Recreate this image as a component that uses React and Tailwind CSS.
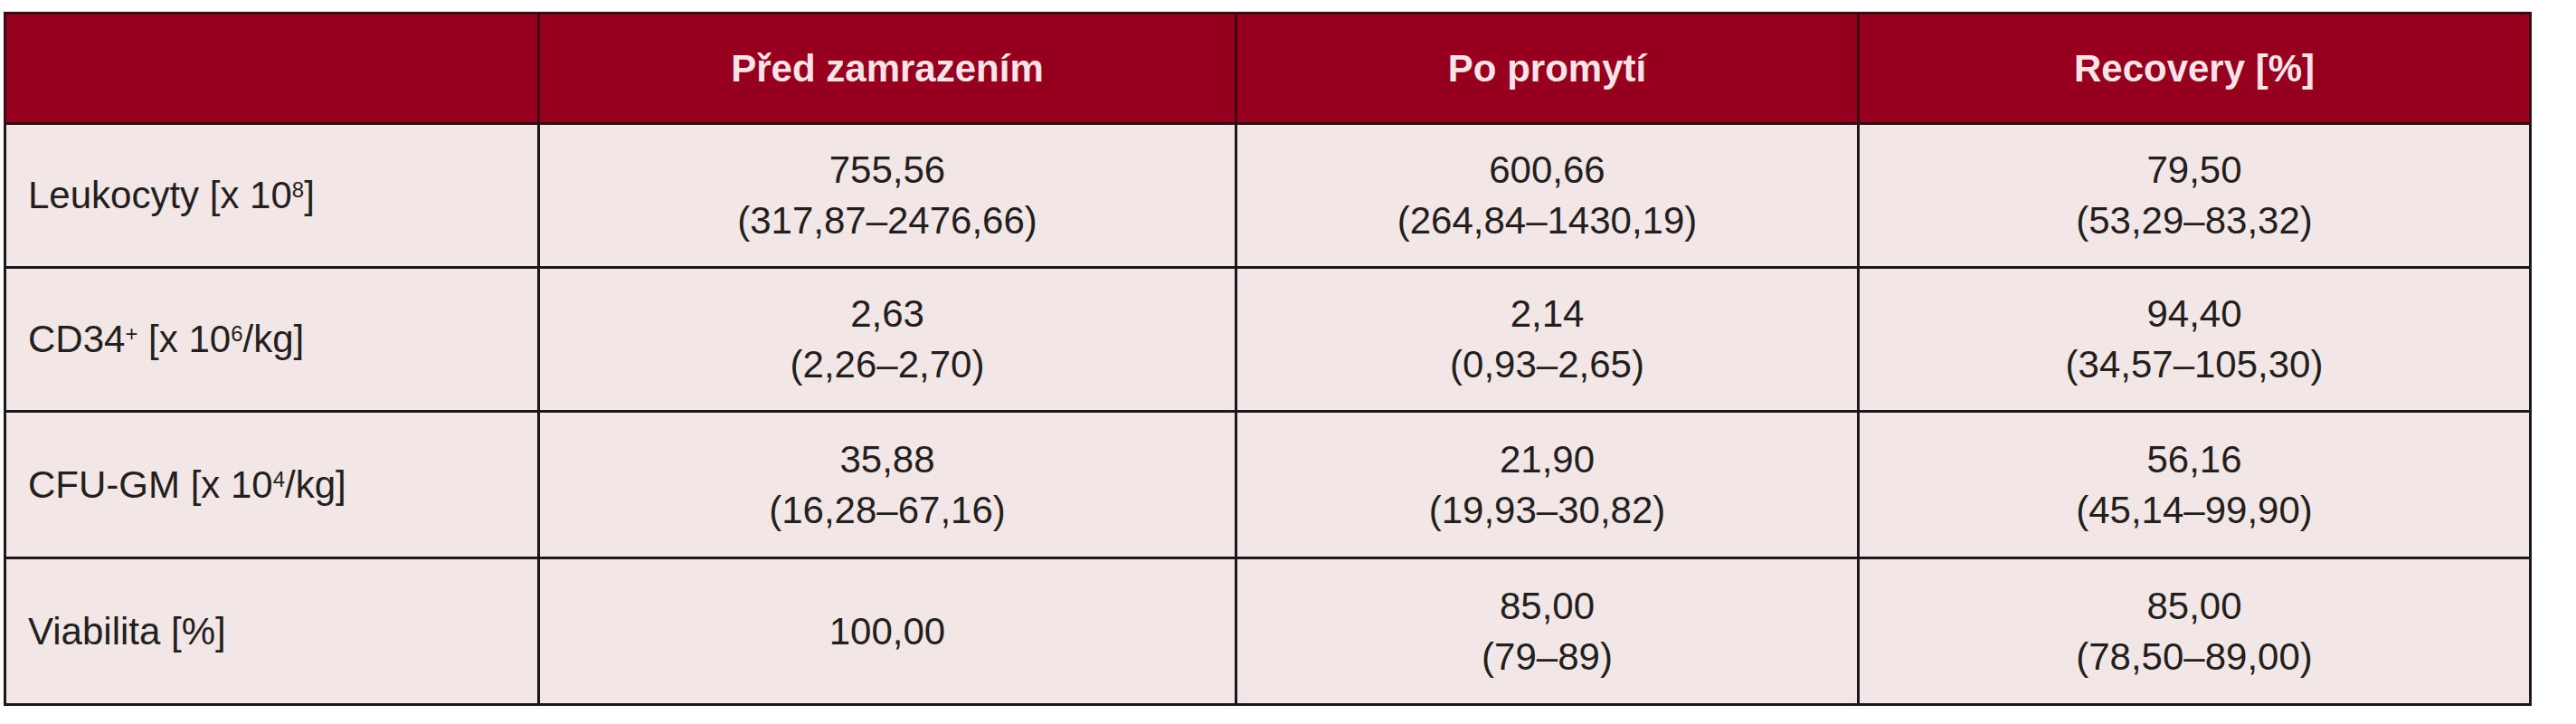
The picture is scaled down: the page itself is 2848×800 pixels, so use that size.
const rows = [
  {
    label: <>Leukocyty [x 10<sup className="text-[24px]">8</sup>]</>,
    cells: [
      ['755,56', '(317,87–2476,66)'],
      ['600,66', '(264,84–1430,19)'],
      ['79,50', '(53,29–83,32)'],
    ],
  },
  {
    label: <>CD34<sup className="text-[24px]">+</sup> [x 10<sup className="text-[24px]">6</sup>/kg]</>,
    cells: [
      ['2,63', '(2,26–2,70)'],
      ['2,14', '(0,93–2,65)'],
      ['94,40', '(34,57–105,30)'],
    ],
  },
  {
    label: <>CFU-GM [x 10<sup className="text-[24px]">4</sup>/kg]</>,
    cells: [
      ['35,88', '(16,28–67,16)'],
      ['21,90', '(19,93–30,82)'],
      ['56,16', '(45,14–99,90)'],
    ],
  },
  {
    label: <>Viabilita [%]</>,
    cells: [
      ['100,00'],
      ['85,00', '(79–89)'],
      ['85,00', '(78,50–89,00)'],
    ],
  },
];

const heads = ['Před zamrazením', 'Po promytí', 'Recovery [%]'];

export default function App() {
  return (
    <div
      className="w-[2848px] h-[800px] bg-white pt-[13px] pl-[4px]"
      style={{ fontFamily: '"Liberation Sans", Arial, sans-serif' }}
    >
      <table className="w-[2792px] table-fixed border-collapse text-[42px] leading-[56px] text-[#231f20]">
        <colgroup>
          <col className="w-[590px]" />
          <col className="w-[771px]" />
          <col className="w-[688px]" />
          <col className="w-[743px]" />
        </colgroup>
        <thead>
          <tr className="h-[122px] bg-[#96001e]">
            <th className="border-[3px] border-[#3a0a12]" />
            {heads.map((h) => (
              <th
                key={h}
                className="border-[3px] border-[#3a0a12] text-center font-bold text-[#fbe3e8]"
              >
                {h}
              </th>
            ))}
          </tr>
        </thead>
        <tbody className="bg-[#f3e6e6]">
          {rows.map((r, i) => (
            <tr key={i} className={i < 2 ? 'h-[159px]' : 'h-[162px]'}>
              <td className="border-[3px] border-[#1c1718] pl-[24px] text-left align-middle">
                {r.label}
              </td>
              {r.cells.map((c, j) => (
                <td key={j} className="border-[3px] border-[#1c1718] text-center align-middle">
                  {c.map((line, k) => (
                    <div key={k}>{line}</div>
                  ))}
                </td>
              ))}
            </tr>
          ))}
        </tbody>
      </table>
    </div>
  );
}
